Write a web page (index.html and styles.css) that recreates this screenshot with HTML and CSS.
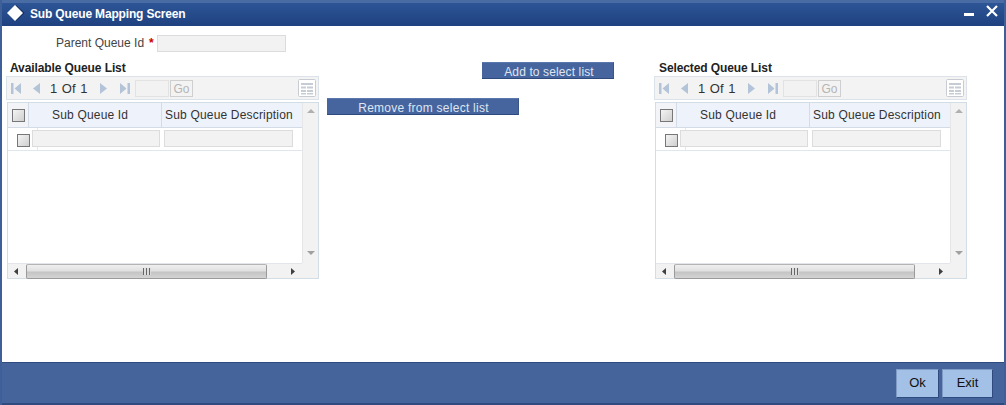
FILE: index.html
```html
<!DOCTYPE html>
<html lang="en">
<head>
<meta charset="utf-8">
<title>Sub Queue Mapping Screen</title>
<link rel="stylesheet" href="styles.css">
</head>
<body>
<div class="window">
  <header class="titlebar">
    <svg class="logo" width="18" height="18" viewBox="0 0 18 18"><path d="M9 1 17.500 9 9 17z" fill="#0f2a5c"/><path d="M8 1 16 9 8 17 0 9z" fill="#fff"/></svg>
    <h1 class="title">Sub Queue Mapping Screen</h1>
    <div class="winctl">
      <svg class="minimize" width="10" height="3" viewBox="0 0 10 3"><rect width="10" height="3" fill="#fff"/></svg>
      <svg width="12" height="12" viewBox="0 0 12 12"><path d="M1 1l10 10M11 1 1 11" stroke="#fff" stroke-width="2.200"/></svg>
    </div>
  </header>
  <main class="content">
    <div class="parent-row">
      <label class="parent-label">Parent Queue Id</label><span class="req">*</span>
      <span class="field parent-field"></span>
    </div>
    <div class="columns">
      <section class="list">
        <h2 class="list-title">Available Queue List</h2>
        <div class="pager">
          <svg class="ic first" width="13" height="13" viewBox="0 0 13 13"><path d="M1 1h2.500v11H1zM11 1v11L4.500 6.500z" fill="#b4c4d8"/></svg>
          <svg class="ic prev" width="9" height="13" viewBox="0 0 9 13"><path d="M8 1v11L1 6.500z" fill="#b4c4d8"/></svg>
          <span class="pg">1 Of 1</span>
          <svg class="ic next" width="9" height="13" viewBox="0 0 9 13"><path d="M1 1v11l7-5.500z" fill="#b4c4d8"/></svg>
          <svg class="ic last" width="13" height="13" viewBox="0 0 13 13"><path d="M2 1v11l6.500-5.500zM9.500 1H12v11H9.500z" fill="#b4c4d8"/></svg>
          <span class="pgfield"></span>
          <span class="go">Go</span>
          <svg class="grid-ic" width="18" height="18" viewBox="0 0 18 18"><rect x=".5" y=".5" width="17" height="17" rx="1" fill="#fff" stroke="#c8ccd2"/><path d="M3 4h12v2H3zM3 7.500h5v2H3zM9 7.500h6v2H9zM3 11h5v2H3zM9 11h6v2H9zM3 14h5v1.500H3zM9 14h6v1.500H9z" fill="#c6ccd4"/></svg>
        </div>
        <div class="table">
          <div class="tbody-area">
            <div class="thead">
              <div class="th chk-col"><span class="cb"></span></div>
              <div class="th id-col">Sub Queue Id</div>
              <div class="th desc-col">Sub Queue Description</div>
            </div>
            <div class="row">
              <span class="rowhead"><span class="cb"></span></span>
              <span class="field id-field"></span>
              <span class="field desc-field"></span>
            </div>
          </div>
          <div class="vscroll">
            <svg width="8" height="4" viewBox="0 0 8 4"><path d="M4 0 8 4H0z" fill="#b0b0b0"/></svg>
            <svg width="8" height="4" viewBox="0 0 8 4"><path d="M0 0h8L4 4z" fill="#a0a0a0"/></svg>
          </div>
          <div class="hscroll">
            <svg width="4" height="7" viewBox="0 0 4 7"><path d="M4 0v7L0 3.500z" fill="#404040"/></svg>
            <div class="thumb"><span class="grip"></span></div>
            <svg width="4" height="7" viewBox="0 0 4 7"><path d="M0 0v7l4-3.500z" fill="#404040"/></svg>
          </div>
          <div class="corner"></div>
        </div>
      </section>
      <div class="actions">
        <button class="move add">Add to select list</button>
        <button class="move remove">Remove from select list</button>
      </div>
      <section class="list list-right">
        <h2 class="list-title">Selected Queue List</h2>
        <div class="pager">
          <svg class="ic first" width="13" height="13" viewBox="0 0 13 13"><path d="M1 1h2.500v11H1zM11 1v11L4.500 6.500z" fill="#b4c4d8"/></svg>
          <svg class="ic prev" width="9" height="13" viewBox="0 0 9 13"><path d="M8 1v11L1 6.500z" fill="#b4c4d8"/></svg>
          <span class="pg">1 Of 1</span>
          <svg class="ic next" width="9" height="13" viewBox="0 0 9 13"><path d="M1 1v11l7-5.500z" fill="#b4c4d8"/></svg>
          <svg class="ic last" width="13" height="13" viewBox="0 0 13 13"><path d="M2 1v11l6.500-5.500zM9.500 1H12v11H9.500z" fill="#b4c4d8"/></svg>
          <span class="pgfield"></span>
          <span class="go">Go</span>
          <svg class="grid-ic" width="18" height="18" viewBox="0 0 18 18"><rect x=".5" y=".5" width="17" height="17" rx="1" fill="#fff" stroke="#c8ccd2"/><path d="M3 4h12v2H3zM3 7.500h5v2H3zM9 7.500h6v2H9zM3 11h5v2H3zM9 11h6v2H9zM3 14h5v1.500H3zM9 14h6v1.500H9z" fill="#c6ccd4"/></svg>
        </div>
        <div class="table">
          <div class="tbody-area">
            <div class="thead">
              <div class="th chk-col"><span class="cb"></span></div>
              <div class="th id-col">Sub Queue Id</div>
              <div class="th desc-col">Sub Queue Description</div>
            </div>
            <div class="row">
              <span class="rowhead"><span class="cb"></span></span>
              <span class="field id-field"></span>
              <span class="field desc-field"></span>
            </div>
          </div>
          <div class="vscroll">
            <svg width="8" height="4" viewBox="0 0 8 4"><path d="M4 0 8 4H0z" fill="#b0b0b0"/></svg>
            <svg width="8" height="4" viewBox="0 0 8 4"><path d="M0 0h8L4 4z" fill="#a0a0a0"/></svg>
          </div>
          <div class="hscroll">
            <svg width="4" height="7" viewBox="0 0 4 7"><path d="M4 0v7L0 3.500z" fill="#404040"/></svg>
            <div class="thumb"><span class="grip"></span></div>
            <svg width="4" height="7" viewBox="0 0 4 7"><path d="M0 0v7l4-3.500z" fill="#404040"/></svg>
          </div>
          <div class="corner"></div>
        </div>
      </section>
    </div>
  </main>
  <footer class="footer">
    <button class="fbtn ok">Ok</button>
    <button class="fbtn exit">Exit</button>
  </footer>
</div>
</body>
</html>
```
FILE: styles.css
```css
* { box-sizing: border-box; }
html, body { margin: 0; padding: 0; background: #fff; }
body { width: 1006px; height: 405px; overflow: hidden; font-family: "Liberation Sans", Arial, sans-serif; font-size: 12px; color: #222; }
.window { width: 1006px; height: 405px; display: flex; flex-direction: column; background: #fff; border-left: 2px solid #3e5f98; border-right: 2px solid #3e5f98; }
.titlebar { height: 26px; flex: none; display: flex; align-items: center; background: linear-gradient(#4a6ca4 0, #4a6ca4 3px, #2d5596 3px, #1f4180 26px); padding: 0 6px 0 5px; }
.logo { flex: none; margin: 0 5px 1px 0; }
.title { margin: 2px 0 0; font-size: 12px; font-weight: bold; color: #fff; letter-spacing: -.16px; white-space: nowrap; }
.winctl { align-self: flex-start; margin-left: auto; display: flex; align-items: flex-start; gap: 12px; padding-top: 5px; }
.minimize { margin-top: 8px; }
.content { flex: 1; min-height: 0; display: flex; flex-direction: column; }
.parent-row { height: 34px; padding-top: 9px; display: flex; align-items: flex-start; }
.parent-label { margin-left: 54px; width: 89px; font-size: 12px; color: #444; line-height: 17px; white-space: nowrap; }
.req { width: 12px; padding-left: 4px; color: #c00; font-weight: bold; line-height: 17px; font-size: 12px; }
.field { display: block; background: #f2f2f2; border: 1px solid #dcdcdc; }
.parent-field { width: 129px; height: 17px; }
.columns { display: flex; padding-left: 5px; }
.list { width: 312px; flex: none; }
.list-title { margin: 0 0 0 3px; height: 16px; font-size: 12px; font-weight: bold; line-height: 17px; color: #222; letter-spacing: -.1px; }
.list-right .list-title { margin-left: 4px; }
.pager { height: 24px; margin-left: -1px; display: flex; align-items: center; background: #f3f3f3; border: 1px solid #dbe2ea; padding-left: 3px; }
.ic { flex: none; }
.prev { margin-left: 9px; }
.pg { width: 38px; margin-left: 9px; font-size: 13px; color: #333; word-spacing: 1px; white-space: nowrap; }
.next { margin-left: 11px; }
.last { margin-left: 10px; }
.pgfield { width: 34px; height: 17px; margin-left: 4px; background: #f2f2f2; border: 1px solid #e2e2e2; }
.go { width: 23px; height: 17px; margin-left: 1px; border: 1px solid #cfcfcf; color: #b5b5b5; font-size: 12px; line-height: 16px; text-align: center; }
.grid-ic { margin-left: auto; margin-right: 2px; }
.table { margin-top: 2px; height: 177px; border: 1px solid #d3dde6; display: grid; grid-template-columns: 294px 16px; grid-template-rows: 160px 15px; background: #fff; }
.tbody-area { overflow: hidden; }
.thead { display: flex; height: 25px; background: #eef2fb; border-bottom: 1px solid #d3dbe6; }
.th { display: flex; align-items: center; height: 24px; font-size: 12px; color: #333; border-right: 1px solid #d3dbe6; white-space: nowrap; letter-spacing: .18px; }
.chk-col { width: 21px; justify-content: center; background: #f3f4f8; }
.id-col { width: 133px; padding-left: 23px; }
.desc-col { width: 140px; padding-left: 3px; border-right: 0; }
.cb { display: block; width: 13px; height: 13px; border: 1px solid #777; background: linear-gradient(135deg, #f4f4f4, #cfcfcf); }
.row { height: 23px; display: flex; align-items: flex-start; border-bottom: 1px solid #dfe6ee; }
.rowhead { width: 30px; height: 22px; flex: none; padding: 6px 0 0 9px; border-right: 1px solid #e4e8ee; }
.id-field { width: 128px; height: 17px; margin: 2px 0 0 -6px; }
.desc-field { width: 129px; height: 17px; margin: 2px 0 0 4px; }
.vscroll { background: #f2f2f2; border-left: 1px solid #e6e6e6; display: flex; flex-direction: column; align-items: center; justify-content: space-between; padding: 6px 0 8px; }
.hscroll { background: #f2f2f2; display: flex; align-items: center; border-top: 1px solid #e2e6ea; padding-left: 6px; }
.hscroll svg:last-child { margin-left: 24px; }
.thumb { width: 241px; height: 15px; margin-left: 8px; flex: none; display: flex; align-items: center; justify-content: center; border: 1px solid #9a9a9a; border-top-color: #b4b4b4; border-radius: 2px; background: linear-gradient(#efefef, #e0e0e0 45%, #c4c4c4 55%, #d4d4d4); }
.grip { width: 8px; height: 7px; background: repeating-linear-gradient(90deg, #666 0 1px, #ddd 1px 3px); }
.corner { background: #f2f2f2; }
.actions { width: 336px; flex: none; display: flex; flex-direction: column; align-items: flex-start; }
.move { display: block; height: 17px; padding: 2px 0 0; border: 0; border-top: 1px solid #5a78ad; border-bottom: 1px solid #2e4a7c; border-right: 1px solid #3a5586; background: #46659e; color: #dfe6f2; font-family: "Liberation Sans", Arial, sans-serif; font-size: 12px; line-height: 14px; }
.add { width: 132px; margin: 2px 0 0 163px; padding-left: 3px; letter-spacing: .12px; }
.remove { width: 192px; margin: 19px 0 0 8px; padding-left: 2px; letter-spacing: .25px; }
.footer { height: 43px; flex: none; display: flex; justify-content: flex-end; align-items: flex-start; gap: 3px; padding: 6px 11px 0 0; background: #46649c; border-top: 1px solid #2f4a7e; border-bottom: 2px solid #2f4a7e; }
.fbtn { height: 29px; padding: 0 0 2px; background: #a3c0e6; border: 1px solid #7f9ac4; border-right-color: #2f4a7e; border-bottom-color: #2f4a7e; color: #111; font-family: "Liberation Sans", Arial, sans-serif; font-size: 13px; }
.ok { width: 43px; }
.exit { width: 51px; }
```
